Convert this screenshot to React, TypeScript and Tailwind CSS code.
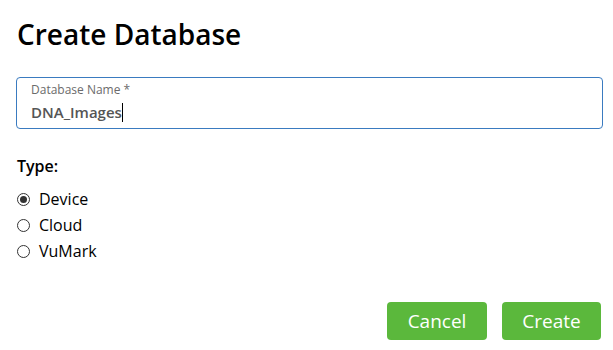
export default function App() {
  const types = ["Device", "Cloud", "VuMark"]
  return (
    <div className="w-[613px] h-[350px] bg-white pl-4 pr-3 pt-[15px] font-['Open_Sans',sans-serif] text-black">
      <h1 className="text-[28px] leading-[38px] font-semibold pl-[1px]">Create Database</h1>
      <div className="mt-[24px] w-[587px] h-[52px] border border-[#3a7bc0] rounded-[4px] pl-[14px] pt-[4px]">
        <div className="text-[12px] leading-[16px] text-[#6b6b6b]">Database Name *</div>
        <div className="flex items-center mt-[3px]">
          <span className="text-[15px] leading-[22px] text-[#555] font-semibold">DNA_Images</span>
          <span className="w-px h-[19px] bg-black" />
        </div>
      </div>
      <div className="mt-[27px] text-[16px] leading-[20px] font-semibold pl-[1px]">Type:</div>
      <div className="mt-[13px] flex flex-col gap-[6px]">
        {types.map((t, i) => (
          <label key={t} className="flex items-center h-[20px] text-[16px]">
            <span className="w-[13px] h-[13px] rounded-full border border-[#333] flex items-center justify-center ml-[1px]">
              {i === 0 && <span className="w-[7px] h-[7px] rounded-full bg-[#333]" />}
            </span>
            <span className="ml-[9px]">{t}</span>
          </label>
        ))}
      </div>
      <div className="mt-[41px] flex justify-end gap-[15px]">
        <button className="w-[100px] h-[38px] rounded-[4px] bg-[#5bb83c] text-white text-[19px]">Cancel</button>
        <button className="w-[99px] h-[38px] rounded-[4px] bg-[#5bb83c] text-white text-[19px]">Create</button>
      </div>
    </div>
  )
}
